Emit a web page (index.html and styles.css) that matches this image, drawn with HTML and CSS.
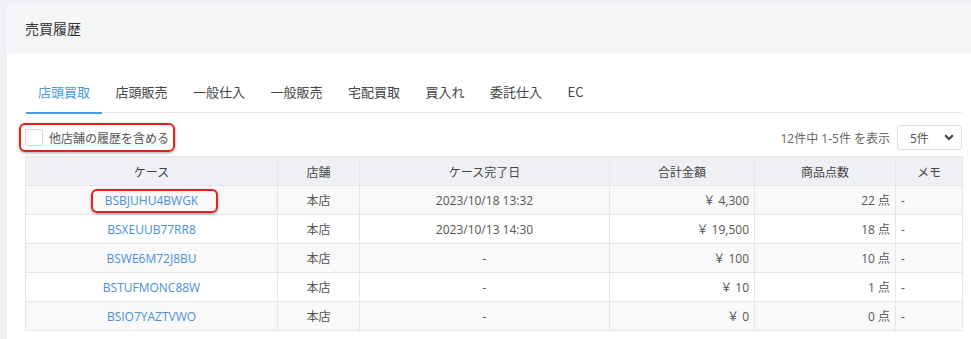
FILE: index.html
```html
<!DOCTYPE html>
<html lang="ja">
<head>
<meta charset="utf-8">
<title>売買履歴</title>
<link rel="stylesheet" href="styles.css">
</head>
<body>
<div class="card">
  <div class="card-header">売買履歴</div>
  <div class="card-body">
    <nav class="tabs">
      <a class="tab active">店頭買取</a>
      <a class="tab">店頭販売</a>
      <a class="tab">一般仕入</a>
      <a class="tab">一般販売</a>
      <a class="tab">宅配買取</a>
      <a class="tab">買入れ</a>
      <a class="tab">委託仕入</a>
      <a class="tab">EC</a>
    </nav>
    <div class="toolbar">
      <label class="check mark mark-check"><span class="box"></span><span>他店舗の履歴を含める</span></label>
      <div class="pager">
        <span class="count">12件中 1-5件 を表示</span>
        <div class="select"><span>5件</span>
          <svg width="10" height="7" viewBox="0 0 10 7"><path d="M1.2 1.2 L5 5 L8.8 1.2" fill="none" stroke="#444" stroke-width="2.2"/></svg>
        </div>
      </div>
    </div>
    <table class="grid">
      <colgroup>
        <col class="c1"><col class="c2"><col class="c3"><col class="c4"><col class="c5"><col class="c6">
      </colgroup>
      <thead>
        <tr><th>ケース</th><th>店舗</th><th>ケース完了日</th><th>合計金額</th><th>商品点数</th><th>メモ</th></tr>
      </thead>
      <tbody>
        <tr><td class="ctr"><a class="link mark mark-link">BSBJUHU4BWGK</a></td><td class="ctr">本店</td><td class="ctr">2023/10/18 13:32</td><td class="num">￥ 4,300</td><td class="num">22 点</td><td class="memo">-</td></tr>
        <tr><td class="ctr"><a class="link">BSXEUUB77RR8</a></td><td class="ctr">本店</td><td class="ctr">2023/10/13 14:30</td><td class="num">￥ 19,500</td><td class="num">18 点</td><td class="memo">-</td></tr>
        <tr><td class="ctr"><a class="link">BSWE6M72J8BU</a></td><td class="ctr">本店</td><td class="ctr">-</td><td class="num">￥ 100</td><td class="num">10 点</td><td class="memo">-</td></tr>
        <tr><td class="ctr"><a class="link">BSTUFMONC88W</a></td><td class="ctr">本店</td><td class="ctr">-</td><td class="num">￥ 10</td><td class="num">1 点</td><td class="memo">-</td></tr>
        <tr><td class="ctr"><a class="link">BSIO7YAZTVWO</a></td><td class="ctr">本店</td><td class="ctr">-</td><td class="num">￥ 0</td><td class="num">0 点</td><td class="memo">-</td></tr>
      </tbody>
    </table>
  </div>
</div>
</body>
</html>
```
FILE: styles.css
```css
* { box-sizing: border-box; }
html, body { margin: 0; height: 100%; }
body {
  background: #eff0f4;
  font-family: "Open Sans", "Noto Sans CJK JP", sans-serif;
  color: #555;
  font-size: 12px;
  overflow: hidden;
}
.card {
  margin: 4px 0 0 7px;
  background: #fff;
  height: calc(100vh - 4px);
}
.card-header {
  height: 50px;
  background: #f5f6f8;
  padding-left: 18px;
  line-height: 50px;
  font-size: 14px;
  color: #333;
}
.card-body {
  padding: 18px 9px 0 18px;
}
.tabs {
  display: flex;
  border-bottom: 1px solid #e4e7ed;
  margin-left: 1px;
  height: 41px;
}
.tab {
  display: block;
  height: 41px;
  line-height: 40px;
  padding: 0 12px;
  margin-right: 1.5px;
  font-size: 13px;
  color: #444;
  font-family: "Noto Sans CJK JP", sans-serif;
}
.tab.active {
  color: #4a9be0;
  border-bottom: 2px solid #4a9be0;
  margin-bottom: -1px;
  height: 42px;
}
.toolbar {
  display: flex;
  justify-content: space-between;
  align-items: center;
  height: 29px;
  margin-top: 10px;
}
.check {
  display: flex;
  align-items: center;
  gap: 6px;
  color: #555;
  font-size: 12px;
  font-family: "Noto Sans CJK JP", sans-serif;
}
.box {
  width: 18px;
  height: 17px;
  border: 1px solid #d6d8dc;
  border-radius: 2px;
  background: #fff;
}
.mark { position: relative; }
.mark::before {
  content: "";
  position: absolute;
  border: 2px solid #e3201b;
  border-radius: 6px;
  box-shadow: 0 1px 3px rgba(0,0,0,0.35);
  pointer-events: none;
}
.mark-check::before { left: -6px; right: -6px; top: -6px; bottom: -6px; }
.mark-link::before { left: -14px; right: -20px; top: -3px; bottom: -4px; }
.pager {
  display: flex;
  align-items: center;
  gap: 7px;
}
.count { color: #666; font-size: 12px; }
.select {
  width: 65px;
  height: 25px;
  border: 1px solid #d9dbe0;
  border-radius: 3px;
  display: flex;
  align-items: center;
  justify-content: space-between;
  padding: 0 7px 0 12px;
  color: #555;
  font-size: 12px;
}
.grid {
  margin-top: 4px;
  width: 937px;
  border-collapse: collapse;
  table-layout: fixed;
  border: 1px solid #e3e6ec;
}
.c1 { width: 252px; }
.c2 { width: 82px; }
.c3 { width: 250px; }
.c4 { width: 145px; }
.c5 { width: 141px; }
.c6 { width: 67px; }
.grid th, .grid td {
  border: 1px solid #e3e6ec;
  height: 29px;
  padding: 0 5px;
  font-size: 12px;
  white-space: nowrap;
}
.grid th {
  background: #eef0f4;
  color: #444;
  font-weight: normal;
  font-family: "Noto Sans CJK JP", sans-serif;
}
.grid tbody tr:nth-child(odd) td { background: #f9f9f9; }
.ctr { text-align: center; }
.num { text-align: right; }
.memo { text-align: left; padding-left: 6px; }
.link { color: #4a8fd8; }
```
